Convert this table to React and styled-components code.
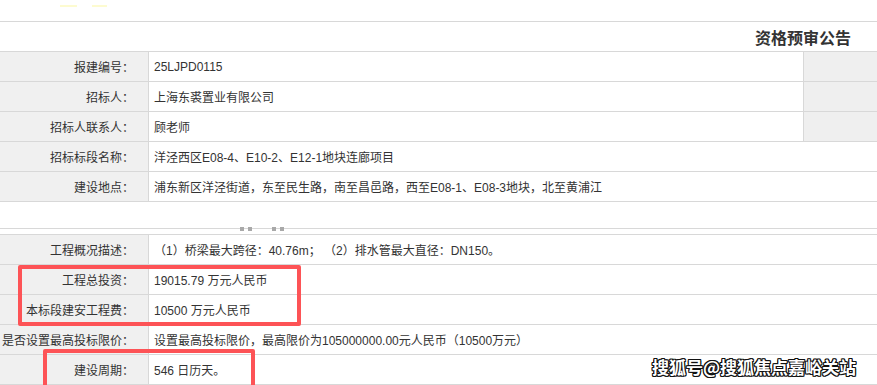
import styled, { createGlobalStyle } from 'styled-components';

const GlobalStyle = createGlobalStyle`
  html, body {
    margin: 0;
    padding: 0;
    background: #fff;
  }
  body {
    font-family: "Liberation Sans", "Noto Sans CJK SC", sans-serif;
    overflow: hidden;
  }
`;

const Page = styled.div`
  position: relative;
  width: 877px;
  height: 385px;
  overflow: hidden;
  font-size: 12px;
  color: #333;
`;

const TopBand = styled.div`
  height: 22px;
  box-sizing: border-box;
  border-bottom: 1px solid #d8d8d8;
  display: flex;
  gap: 15px;
  padding: 5px 0 0 60px;
`;

const Smudge = styled.span`
  display: block;
  width: ${(p) => p.$w}px;
  height: 2px;
  background: #fdfbd0;
`;

const TitleRow = styled.div`
  height: 30px;
  box-sizing: border-box;
  border-bottom: 1px solid #d8d8d8;
  display: flex;
  align-items: center;
  justify-content: flex-end;
  padding-right: 26px;
`;

const Title = styled.h1`
  margin: 0;
  font-size: 16px;
  font-weight: bold;
  color: #333;
`;

const Row = styled.div`
  display: flex;
  height: 30px;
  box-sizing: border-box;
  border-bottom: 1px solid #d8d8d8;
`;

const Label = styled.div`
  width: 149px;
  flex: none;
  box-sizing: border-box;
  border-right: 1px solid #d8d8d8;
  background: #f0f0f0;
  display: flex;
  align-items: center;
  justify-content: flex-end;
  padding-right: 14px;
  white-space: nowrap;
`;

const Value = styled.div`
  flex: 1;
  display: flex;
  align-items: center;
  padding-left: 5px;
  white-space: nowrap;
`;

const Side = styled.div`
  width: 74px;
  flex: none;
  box-sizing: border-box;
  border-left: 1px solid #d8d8d8;
  background: #efefef;
`;

const Gap = styled.div`
  height: 27px;
  box-sizing: border-box;
  border-bottom: 1px solid #d8d8d8;
  display: flex;
  align-items: flex-end;
  padding-left: 240px;
  gap: 4px;
`;

const Spacer = styled.div`
  height: 6px;
  box-sizing: border-box;
  border-bottom: 1px solid #d8d8d8;
`;

const Dot = styled.span`
  display: block;
  width: 4px;
  height: 4px;
  margin-bottom: -3px;
  margin-left: ${(p) => p.$ml || 0}px;
  background: #a9a9a9;
`;

const Highlight = styled.div`
  position: absolute;
  left: ${(p) => p.$x}px;
  top: ${(p) => p.$y}px;
  width: ${(p) => p.$w}px;
  height: ${(p) => p.$h}px;
  box-sizing: border-box;
  border: 4px solid #fd5356;
  border-radius: 2px;
  pointer-events: none;
`;

const Watermark = styled.div`
  position: absolute;
  left: 652px;
  top: 354px;
  font-family: "Noto Sans CJK SC", sans-serif;
  font-size: 17px;
  font-weight: bold;
  color: #fff;
  text-shadow:
    1px 1px 0 #111, -1px -1px 0 #111, 1px -1px 0 #111, -1px 1px 0 #111,
    1px 0 0 #111, -1px 0 0 #111, 0 1px 0 #111, 0 -1px 0 #111;
`;

const topRows = [
  { label: '报建编号：', value: '25LJPD0115', side: true },
  { label: '招标人：', value: '上海东裘置业有限公司', side: true },
  { label: '招标人联系人：', value: '顾老师', side: true },
  { label: '招标标段名称：', value: '洋泾西区E08-4、E10-2、E12-1地块连廊项目' },
  { label: '建设地点：', value: '浦东新区洋泾街道，东至民生路，南至昌邑路，西至E08-1、E08-3地块，北至黄浦江' },
];

const bottomRows = [
  { label: '工程概况描述：', value: '（1）桥梁最大跨径：40.76m；  （2）排水管最大直径：DN150。' },
  { label: '工程总投资：', value: '19015.79 万元人民币' },
  { label: '本标段建安工程费：', value: '10500 万元人民币' },
  { label: '是否设置最高投标限价：', value: '设置最高投标限价，最高限价为105000000.00元人民币（10500万元）' },
  { label: '建设周期：', value: '546 日历天。' },
];

const InfoRow = ({ label, value, side }) => (
  <Row>
    <Label>{label}</Label>
    <Value>{value}</Value>
    {side && <Side />}
  </Row>
);

export default function App() {
  return (
    <>
      <GlobalStyle />
      <Page>
        <TopBand>
          <Smudge $w={17} />
          <Smudge $w={15} />
        </TopBand>
        <TitleRow>
          <Title>资格预审公告</Title>
        </TitleRow>
        {topRows.map((r) => (
          <InfoRow key={r.label} {...r} />
        ))}
        <Gap>
          <Dot />
          <Dot />
          <Dot $ml={16} />
          <Dot />
        </Gap>
        <Spacer />
        {bottomRows.map((r) => (
          <InfoRow key={r.label} {...r} />
        ))}
        <Highlight $x={18} $y={265} $w={283} $h={61} />
        <Highlight $x={43} $y={349} $w={212} $h={44} />
        <Watermark>搜狐号@搜狐焦点嘉峪关站</Watermark>
      </Page>
    </>
  );
}
